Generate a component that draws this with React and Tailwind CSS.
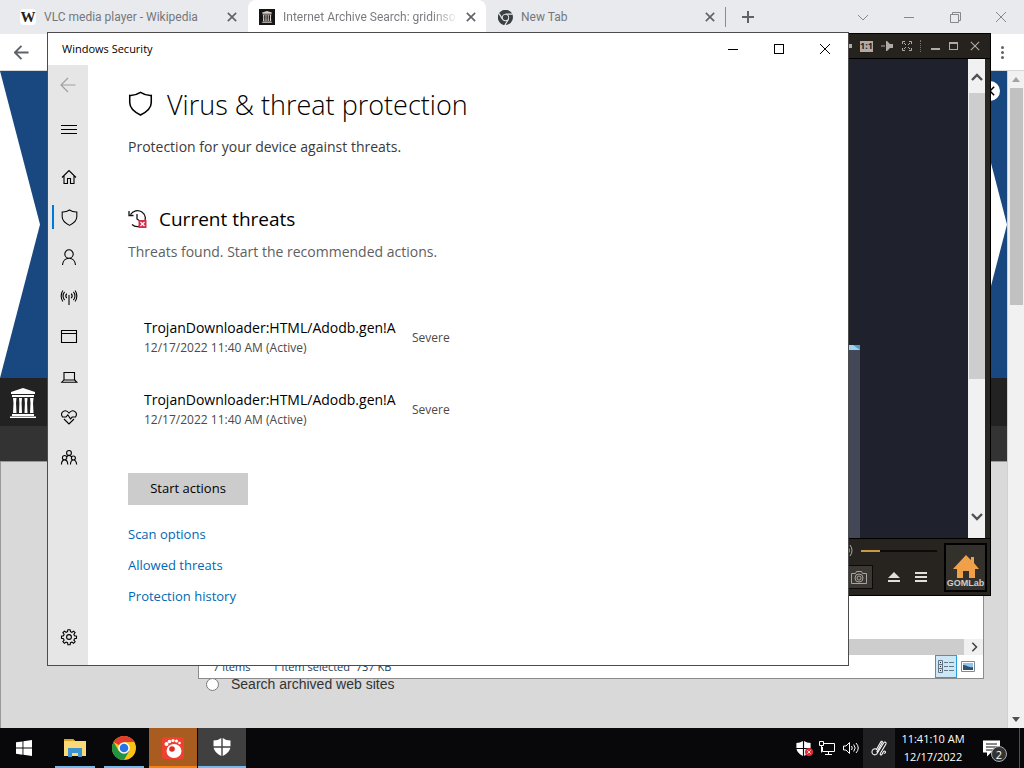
import React from "react";

const stroke = { fill: "none", stroke: "currentColor", strokeWidth: 1.1 };

function Shield({ className, width = 1.6 }) {
  return (
    <svg viewBox="0 0 26 26" className={className} fill="none" stroke="currentColor" strokeWidth={width} aria-hidden="true">
      <path d="M13 1.500C9.600 3.800 6 4.800 1.800 4.600V12c0 5.800 4.200 9.600 11.200 13 7-3.400 11.200-7.200 11.200-13V4.600C20 4.800 16.400 3.800 13 1.500Z" />
    </svg>
  );
}

function Temple({ className, fill = "#fff" }) {
  return (
    <svg viewBox="0 0 26 30" className={className} fill={fill} aria-hidden="true">
      <path d="M13 0 25 4v2H1V4ZM2 7h22v2H2ZM2 26h22v2H2ZM0 28.500h26V30H0Z" />
      <path d="M3 10h3.500l-.5 5 .5 10H3l.5-10ZM9 10h3l-.4 5 .4 10H9l.4-10ZM14.500 10h3l-.4 5 .4 10h-3l.4-10ZM20 10h3.500l-.5 5 .5 10H20l.5-10Z" />
    </svg>
  );
}

function Cross({ className, width = 1.2 }) {
  return (
    <svg viewBox="0 0 12 12" className={className} fill="none" stroke="currentColor" strokeWidth={width} aria-hidden="true">
      <path d="M1 1l10 10M11 1L1 11" />
    </svg>
  );
}

function ArrowLeft({ className, width = 1.2 }) {
  return (
    <svg viewBox="0 0 16 16" className={className} fill="none" stroke="currentColor" strokeWidth={width} aria-hidden="true">
      <path d="M15.500 8H1.500M8 1 1 8l7 7" />
    </svg>
  );
}

function Chevron({ className, d = "M1 8l5-5 5 5", width = 2.4 }) {
  return (
    <svg viewBox="0 0 12 12" className={className} fill="none" stroke="currentColor" strokeWidth={width} aria-hidden="true">
      <path d={d} />
    </svg>
  );
}

const navIcons = {
  menu: <path d="M0 4.500h16M0 8.500h16M0 12.500h16" />,
  home: <path d="M1 8.500 8 1.500l7 7M3 7v7.500h3.500V9.500h3v5H13V7" />,
  account: <path d="M8 .8a4.200 4.200 0 1 1 0 8.400A4.200 4.200 0 0 1 8 .8ZM1.500 16c.3-4 3-6.800 6.500-6.800s6.200 2.800 6.500 6.800" />,
  network: <path d="M8 6v10M5.800 9.200c-1.200-1.300-1.200-3.200 0-4.600M10.200 9.200c1.200-1.300 1.200-3.200 0-4.600M3.600 11C1.500 8.800 1.500 5 3.600 2.800M12.400 11c2.100-2.200 2.100-6 0-8.200M1.900 12.500C-.4 9.500-.4 4.500 1.900 1.500M14.100 12.500c2.300-3 2.300-8 0-11" />,
  app: <path d="M.5 1.500h15v12H.5ZM.5 4.500h15" />,
  device: <path d="M3 3.500h10.500v7.500H3ZM2.800 11 .8 13.200h15L13.700 11" />,
  health: <path d="M1.500 8C.2 6 .4 3.800 2 2.600c1.800-1.300 4.300-.8 6 1.400 1.700-2.200 4.200-2.700 6-1.400 1.600 1.200 1.800 3.400.5 5.400M1 8h4l1.800-2.200L9.500 9.800 11.200 8H15M3 10l5 5 5-5" />,
  family: <path d="M8 1.500a2.400 2.400 0 1 1 0 4.800 2.400 2.400 0 0 1 0-4.800ZM3.600 6.500a2.200 2.200 0 1 1 0 4.400 2.200 2.200 0 0 1 0-4.400ZM12.400 7a2 2 0 1 1 0 4 2 2 0 0 1 0-4ZM.4 15.500c.2-2.800 1.400-4.600 3.200-4.600s3 1.800 3.200 4.600M9.400 15.500c.2-2.800 1.200-4.500 3-4.500s3 1.700 3.200 4.500M5.400 7.800 8 6.300l2.800 1.500" />,
  settings: (
    <>
      <circle cx="8" cy="8" r="2.400" />
      <path d="M6.900.7h2.200l.4 2 1.400.6 1.700-1.200 1.500 1.500-1.200 1.700.6 1.400 2 .4v2.200l-2 .4-.6 1.400 1.200 1.700-1.500 1.500-1.700-1.200-1.400.6-.4 2H6.900l-.4-2-1.400-.6-1.700 1.200-1.500-1.500 1.200-1.700-.6-1.400-2-.4V7.100l2-.4.6-1.400-1.200-1.700 1.500-1.500 1.700 1.200 1.400-.6Z" />
    </>
  ),
};

function NavItem({ name, label, active }) {
  return (
    <button type="button" aria-label={label} className="relative flex h-10 w-full shrink-0 items-center justify-center pl-0.5">
      {active && <span className="absolute left-1 h-6 w-0.5 bg-[#0078d7]" />}
      {name === "shield" ? (
        <Shield className="size-[17px]" />
      ) : (
        <svg viewBox="0 0 16 16" className="size-4 overflow-visible" {...stroke} aria-hidden="true">
          {navIcons[name]}
        </svg>
      )}
    </button>
  );
}

function BrowserTab({ icon, title, active, className }) {
  return (
    <div className={`flex h-full shrink-0 items-center font-['Roboto','Open_Sans',sans-serif] ${active ? "rounded-t-lg bg-white" : ""} ${className}`}>
      {icon}
      <span className={`ml-2 flex-1 whitespace-nowrap text-xs ${active ? "bg-linear-to-r from-[#75777b] from-85% to-white bg-clip-text text-transparent" : "text-[#75777b]"}`}>{title}</span>
      <button type="button" aria-label={"Close " + title} className="ml-2 text-[#5f6368]">
        <Cross className="size-2.5" width={1.9} />
      </button>
    </div>
  );
}

function ChromeMark({ className, mono }) {
  return (
    <svg viewBox="0 0 24 24" className={className} aria-hidden="true">
      <circle cx="12" cy="12" r="12" fill={mono ? "#3c4043" : "#fbc116"} />
      <path d="M12 12 1.600 6A12 12 0 0 1 22.400 6H12Z" fill={mono ? "#3c4043" : "#e33b2e"} />
      <path d="M1.600 6A12 12 0 0 0 12 24l5.200-9L12 12 6.800 15Z" fill={mono ? "#3c4043" : "#229342"} />
      {mono && <path d="M12 6.500h11M7.200 14.800 1.800 5.800M16.800 14.800 11 24" stroke="#e8eaed" strokeWidth="2" />}
      <circle cx="12" cy="12" r="5.800" fill={mono ? "#e8eaed" : "#fff"} />
      <circle cx="12" cy="12" r="4.300" fill={mono ? "#3c4043" : "#2674e8"} />
    </svg>
  );
}

function Browser() {
  return (
    <div className="flex min-h-0 flex-1 flex-col">
      <header className="flex h-[34px] shrink-0 items-center bg-[#e8eaed]">
        <BrowserTab
          className="w-[248px] pl-5 pr-[11px]"
          title="VLC media player - Wikipedia"
          icon={<span className="flex size-4 items-center justify-center rounded-sm bg-white font-['Liberation_Serif',serif] text-[15px] font-bold leading-4 text-[#222]">W</span>}
        />
        <BrowserTab
          active
          className="w-[238px] pl-[11px] pr-2.5"
          title="Internet Archive Search: gridinso"
          icon={<span className="flex size-4 items-center justify-center bg-[#151515]"><Temple className="h-3 w-3" fill="#d9cfc9" /></span>}
        />
        <BrowserTab className="w-[239px] pl-3 pr-2.5" title="New Tab" icon={<ChromeMark mono className="size-[15px]" />} />
        <span className="h-5 w-px bg-[#8a8c90]" />
        <button type="button" aria-label="New tab" className="ml-4 text-[#5f6368]">
          <svg viewBox="0 0 12 12" className="size-3" stroke="currentColor" strokeWidth="2"><path d="M6 0v12M0 6h12" /></svg>
        </button>
        <div className="ml-auto flex h-7 items-center text-[#85878b]">
          <button type="button" aria-label="Search tabs" className="flex w-[46px] justify-center"><Chevron className="size-3" d="M1 4l5 5 5-5" width={1} /></button>
          <button type="button" aria-label="Minimize browser" className="flex w-[46px] justify-center"><span className="h-px w-2.5 bg-[#85878b]" /></button>
          <button type="button" aria-label="Restore browser" className="flex w-[46px] justify-center">
            <svg viewBox="0 0 11 11" className="size-[11px]" fill="none" stroke="currentColor"><path d="M.5 2.500h8v8h-8ZM2.500 2.500v-2h8v8h-2" /></svg>
          </button>
          <button type="button" aria-label="Close browser" className="flex w-[46px] justify-center"><Cross className="size-3" width={1} /></button>
        </div>
      </header>
      <div className="flex h-[37px] shrink-0 items-center justify-between border-b border-[#d5d7da] bg-white pl-3.5 pr-5 text-[#5f6368]">
        <button type="button" aria-label="Back"><ArrowLeft className="size-[15px]" width={2} /></button>
        <button type="button" aria-label="Browser menu" className="flex flex-col gap-0.5">
          <span className="size-[3px] rounded-full bg-current" />
          <span className="size-[3px] rounded-full bg-current" />
          <span className="size-[3px] rounded-full bg-current" />
        </button>
      </div>
      <div className="flex min-h-0 flex-1">
        <main className="flex min-w-0 flex-1 flex-col bg-[#d9d9d9]">
          <div className="relative flex h-[307px] shrink-0 justify-between overflow-hidden bg-[#194880]">
            <svg viewBox="0 0 40 307" className="h-full w-10" fill="#fff" aria-hidden="true"><path d="M0 0 40 153.500 0 307Z" /></svg>
            <svg viewBox="0 0 40 307" className="h-full w-10" fill="#fff" aria-hidden="true"><path d="M0 0 40 153.500 0 307Z" /></svg>
            <button type="button" aria-label="Dismiss banner" className="absolute right-[7px] top-2.5 flex size-5 items-center justify-center rounded-full bg-white text-black">
              <Cross className="size-2.5" width={1.8} />
            </button>
          </div>
          <div className="flex h-12 shrink-0 items-center bg-[#222] pl-2.5 pt-0.5"><Temple className="h-[30px] w-[26px]" /></div>
          <div className="h-[35px] shrink-0 bg-[#333]" />
          <div className="flex flex-1 flex-col border-l border-t border-[#999] pl-[205px] pt-[212px]">
            <label className="flex items-center gap-3 font-['Liberation_Sans',sans-serif] text-sm leading-5 text-[#333]">
              <input type="radio" name="scope" className="size-[13px]" />
              Search archived web sites
            </label>
          </div>
        </main>
        <div className="flex w-[17px] flex-col items-center border-l border-[#d0d0d0] bg-[#f1f1f1] py-1.5">
          <svg viewBox="0 0 8 5" className="mb-1.5 h-[5px] w-2 shrink-0" fill="#a3a3a3"><path d="M4 0 8 5H0Z" /></svg>
          <span className="h-[217px] w-[13px] shrink-0 bg-[#c1c1c1]" />
          <svg viewBox="0 0 8 5" className="mt-auto h-[5px] w-2 shrink-0" fill="#505050"><path d="M0 0h8L4 5Z" /></svg>
        </div>
      </div>
    </div>
  );
}

function Explorer() {
  return (
    <section aria-label="File Explorer" className="absolute left-[198px] top-[500px] flex h-[179px] w-[786px] flex-col justify-end border border-[#8c8c8c] bg-white">
      <div className="flex h-4 shrink-0 bg-[#f0f0f0]">
        <span className="flex-1 bg-[#cdcdcd]" />
        <span className="flex w-[19px] items-center justify-center text-[#404040]"><Chevron className="size-2.5" d="M4 1l5 5-5 5" width={1.8} /></span>
      </div>
      <div className="flex h-[23px] shrink-0 items-center pl-3.5 text-[11px] leading-4 text-[#253d57]">
        <span>7 items</span>
        <span className="ml-[22px]">1 item selected&nbsp; 737 KB</span>
        <button type="button" aria-label="Details view" className="ml-auto flex h-[23px] w-[22px] items-center justify-center border border-[#26a0da] bg-[#cce8f6]">
          <svg viewBox="0 0 16 13" className="h-[13px] w-4" fill="none" stroke="#637788"><path d="M.5.5h4v12h-4ZM.5 4.500h4M.5 8.500h4M6 2.500h4M11 2.500h5M6 6.500h4M11 6.500h5M6 10.500h4M11 10.500h5" /><path d="M2 2.500h1M2 6.500h1M2 10.500h1" stroke="#222" /></svg>
        </button>
        <button type="button" aria-label="Thumbnail view" className="ml-1 mr-2">
          <svg viewBox="0 0 14 11" className="h-[11px] w-3.5"><path d="M.5.5h13v10H.5Z" fill="#fff" stroke="#7d8b98" /><path d="M2 2h10v7H2Z" fill="#91c5e9" /><path d="M2 4c4 0 5 3 10 2v3H2Z" fill="#31516b" /></svg>
        </button>
      </div>
    </section>
  );
}

function MediaPlayer() {
  return (
    <section aria-label="GOM Player" className="absolute left-[600px] top-[33px] flex h-[563px] w-[391px] flex-col border border-black bg-[#26231f] text-[#b0aca5]">
      <div className="flex h-6 shrink-0 items-center justify-end gap-2 pr-2.5">
        <span className="h-1 w-3 bg-current" />
        <span className="flex h-[11px] w-[13px] items-center justify-center bg-[#b0aca5] text-[9px] font-bold leading-3 text-[#26231f]">1:1</span>
        <svg viewBox="0 0 13 12" className="h-3 w-[13px]" fill="currentColor"><path d="M0 5.500h4v1H0ZM5 1h1l3 3h3v4H9l-3 3H5Z" /></svg>
        <svg viewBox="0 0 10 10" className="size-2.5" fill="none" stroke="currentColor"><path d="M.5 3V.5H3M7 .5h2.500V3M9.500 7v2.500H7M3 9.500H.5V7M2 2l2 2M8 2 6 4M8 8 6 6M2 8l2-2" /></svg>
        <span className="h-3 border-l border-dotted border-[#77736c]" />
        <button type="button" aria-label="Minimize player" className="flex h-2 w-3 items-end justify-center"><span className="h-0.5 w-[9px] bg-current" /></button>
        <button type="button" aria-label="Maximize player" className="h-2 w-[9px] border border-t-2 border-[#b0aca5]" />
        <button type="button" aria-label="Close player" className="ml-1"><Cross className="size-2.5" width={1.3} /></button>
      </div>
      <div className="flex min-h-0 flex-1 border-y border-black bg-[#1f212d] pr-[5px]">
        <div className="flex min-w-0 flex-1 items-end">
          <svg viewBox="0 0 259 193" className="h-[193px] w-[259px]" aria-hidden="true">
            <path d="M0 0h259v193H0Z" fill="#444757" />
            <path d="M0 0h259v5H0Z" fill="#9bd4f0" />
            <path d="M252 0h7v5Z" fill="#4f9cc6" />
          </svg>
        </div>
        <div className="flex w-[17px] flex-col items-center bg-[#f1f1f1] text-[#505050]">
          <Chevron className="my-[11px] size-3 shrink-0" d="M1 10l5-5 5 5" />
          <span className="h-[286px] w-4 shrink-0 bg-[#cdcdcd]" />
          <Chevron className="mb-4 mt-auto size-3 shrink-0" d="M1 4l5 5 5-5" />
        </div>
        <span className="-mr-[5px] w-[5px] bg-[#292622]" />
      </div>
      <div className="flex h-[56px] shrink-0 items-center justify-end gap-[7px] bg-[#272420] pr-[3px]">
        <div className="flex h-full w-[92px] flex-col justify-between pb-1.5 pt-1.5">
          <div className="flex items-center gap-2">
            <svg viewBox="0 0 8 11" className="h-[11px] w-2" fill="none" stroke="currentColor"><path d="M1 3q2 2.500 0 5M3 1.500q3 4 0 8M5 0q4 5.500 0 11" /></svg>
            <span className="flex h-0.5 flex-1 bg-[#0c0b0a]"><span className="w-1/4 bg-[#c79b45]" /></span>
          </div>
          <div className="flex items-center gap-[15px] text-[#e1dfda]">
            <button type="button" aria-label="Screenshot" className="flex h-6 w-7 items-center justify-center border border-[#0b0a09] bg-[#3b3733] text-[#a9a59d]">
              <svg viewBox="0 0 16 14" className="h-3.5 w-4" fill="none" stroke="currentColor"><path d="M.5 3.500h4l1-2h5l1 2h4v10H.5Z" /><circle cx="8" cy="8" r="4" /><circle cx="8" cy="8" r="2" /></svg>
            </button>
            <button type="button" aria-label="Open file"><svg viewBox="0 0 12 11" className="h-[11px] w-3" fill="currentColor"><path d="M6 0 12 6H0ZM0 8h12v2H0Z" /></svg></button>
            <button type="button" aria-label="Playlist"><svg viewBox="0 0 12 11" className="h-[11px] w-3" fill="currentColor"><path d="M0 0h12v2H0ZM0 4h12v2H0ZM0 8h12v2H0Z" /></svg></button>
          </div>
        </div>
        <a href="#gomlab" className="flex h-[49px] w-[43px] flex-col items-center justify-end border-2 border-black bg-[#34312d] pb-0.5">
          <svg viewBox="0 0 26 23" className="h-[23px] w-[26px]" fill="#f0a048"><path d="M13 0 18 5V2h3v6l5 6h-4v9h-6v-7h-6v7H4v-9H0Z" /></svg>
          <span className="whitespace-nowrap font-['Liberation_Sans',sans-serif] text-[9px] font-bold leading-[10px] text-[#d0ccc5]">GOMLab</span>
        </a>
      </div>
    </section>
  );
}

const threats = [
  { id: 1, name: "TrojanDownloader:HTML/Adodb.gen!A", detail: "12/17/2022 11:40 AM (Active)", level: "Severe" },
  { id: 2, name: "TrojanDownloader:HTML/Adodb.gen!A", detail: "12/17/2022 11:40 AM (Active)", level: "Severe" },
];

function Security() {
  return (
    <section aria-label="Windows Security" className="absolute left-[47px] top-8 flex h-[634px] w-[802px] flex-col border border-[#4c4c4c] bg-white text-black">
      <header className="flex h-8 shrink-0 items-center justify-between pl-3.5">
        <span className="text-[11px]">Windows Security</span>
        <div className="flex h-full">
          <button type="button" aria-label="Minimize" className="flex w-[46px] items-center justify-center"><span className="h-px w-2.5 bg-black" /></button>
          <button type="button" aria-label="Maximize" className="flex w-[46px] items-center justify-center"><span className="size-2.5 border border-black" /></button>
          <button type="button" aria-label="Close" className="flex w-[46px] items-center justify-center"><Cross className="size-3" width={1} /></button>
        </div>
      </header>
      <div className="flex min-h-0 flex-1">
        <nav aria-label="Sections" className="flex w-10 flex-col bg-[#e6e6e6] pb-2">
          <button type="button" aria-label="Go back" className="flex h-10 items-center justify-center text-[#a0a0a0]"><ArrowLeft className="size-4" /></button>
          <div className="mb-2 mt-1"><NavItem name="menu" label="Menu" /></div>
          <NavItem name="home" label="Home" />
          <NavItem name="shield" label="Virus & threat protection" active />
          <NavItem name="account" label="Account protection" />
          <NavItem name="network" label="Firewall & network protection" />
          <NavItem name="app" label="App & browser control" />
          <NavItem name="device" label="Device security" />
          <NavItem name="health" label="Device performance & health" />
          <NavItem name="family" label="Family options" />
          <div className="mt-auto"><NavItem name="settings" label="Settings" /></div>
        </nav>
        <main className="min-w-0 flex-1 px-10 pt-[22px]">
          <h1 className="flex items-center gap-3.5 text-[27px] font-light leading-9">
            <Shield className="-mt-1 size-[25px]" />
            Virus &amp; threat protection
          </h1>
          <p className="mt-3.5 text-sm leading-5 text-[#3a3a3a]">Protection for your device against threats.</p>
          <h2 className="mt-12 flex items-center gap-3 text-[19px] leading-7">
            <svg viewBox="0 0 19 19" className="-mt-0.5 size-[19px]" fill="none" stroke="#111" strokeWidth="1.300" aria-hidden="true">
              <path d="M2.500 5.500A8 8 0 1 1 4 15.500M1 2v4.500h4.500M9 5v5l3.500 2.500" />
              <path d="M10.500 11h8v8h-8Z" fill="#d52b4a" stroke="none" />
              <path d="M12.500 13l4 4M16.500 13l-4 4" stroke="#fff" />
            </svg>
            Current threats
          </h2>
          <p className="mt-[9px] text-sm leading-5 text-[#606060]">Threats found. Start the recommended actions.</p>
          <ul className="mt-14 flex flex-col gap-8 pl-4">
            {threats.map((t) => (
              <li key={t.id} className="flex items-center gap-3">
                <div className="w-64">
                  <div className="text-sm leading-5">{t.name}</div>
                  <div className="text-xs leading-5 text-[#4a4a4a]">{t.detail}</div>
                </div>
                <span className="text-xs leading-5 text-[#4a4a4a]">{t.level}</span>
              </li>
            ))}
          </ul>
          <button type="button" className="mt-[43px] h-8 w-[120px] bg-[#ccc] text-[13px]">Start actions</button>
          <div className="mt-3.5 flex flex-col items-start text-[13px] leading-[31px] text-[#0068b4]">
            <a href="#scan">Scan options</a>
            <a href="#allowed">Allowed threats</a>
            <a href="#history">Protection history</a>
          </div>
        </main>
      </div>
    </section>
  );
}

function DefenderIcon({ className }) {
  return (
    <svg viewBox="0 0 18 18" className={className} fill="#fff" aria-hidden="true">
      <path d="M8.300 0v8.300H.5V2.500Q5 2.500 8.300 0ZM9.700 0Q13 2.500 17.500 2.500v5.800H9.700ZM.6 9.700h7.700V18Q1.500 14.500.6 9.700ZM9.700 9.700h7.700Q16.500 14.500 9.700 18Z" />
    </svg>
  );
}

function TaskButton({ label, className, children }) {
  return (
    <button type="button" aria-label={label} className={`relative flex h-10 w-12 items-center justify-center ${className ?? ""}`}>
      {children}
    </button>
  );
}

function Taskbar() {
  return (
    <footer className="relative flex h-10 shrink-0 items-stretch bg-[#08080a] text-white">
      <div className="flex gap-px">
        <TaskButton label="Start" className="mr-0.5">
          <svg viewBox="0 0 16 16" className="size-4" fill="#fff"><path d="M0 2.300 6.500 1.400v6.200H0ZM7.400 1.200 16 0v7.600H7.400ZM0 8.500h6.500v6.200L0 13.800ZM7.400 8.500H16V16l-8.600-1.200Z" /></svg>
        </TaskButton>
        <TaskButton label="File Explorer">
          <svg viewBox="0 0 22 18" className="h-[18px] w-[22px]"><path d="M0 0h9l2 2h11v15H0Z" fill="#f9d978" /><path d="M0 0h9l2 2H0Z" fill="#d9a21f" /><path d="M4 9h14v9h-4v-4H8v4H4Z" fill="#3c93cf" /></svg>
          <span className="absolute bottom-0 h-0.5 w-10 bg-[#76b9ed]" />
        </TaskButton>
        <TaskButton label="Chrome">
          <ChromeMark className="size-6" />
          <span className="absolute bottom-0 h-0.5 w-10 bg-[#76b9ed]" />
        </TaskButton>
        <TaskButton label="GOM Player" className="border-b-2 border-[#f7820e] bg-[#a85c20]">
          <svg viewBox="0 0 22 22" className="mt-0.5 size-[22px]" fill="#fff"><rect width="22" height="22" rx="3" fill="#f04030" /><ellipse cx="12" cy="14" rx="7.500" ry="7" /><circle cx="4.500" cy="7" r="2" /><circle cx="7.500" cy="4.500" r="1.800" /><circle cx="11" cy="3.500" r="1.600" /><circle cx="14.500" cy="4" r="1.500" /><circle cx="17.500" cy="6" r="1.300" /><circle cx="10" cy="12" r="2.800" fill="#e02c24" /></svg>
        </TaskButton>
        <TaskButton label="Windows Security" className="border-b-2 border-[#76b9ed] bg-[#404040]"><DefenderIcon className="size-[18px]" /></TaskButton>
      </div>
      <div className="ml-auto flex items-center">
        <div className="flex items-center gap-2 pr-1">
          <button type="button" aria-label="Security status" className="relative">
            <DefenderIcon className="size-[15px]" />
            <span className="absolute -right-0.5 bottom-0 flex size-2 items-center justify-center rounded-full bg-[#e02c36]"><Cross className="size-1" width={2.4} /></span>
          </button>
          <button type="button" aria-label="Network"><svg viewBox="0 0 16 14" className="h-3.5 w-4" fill="none" stroke="#fff"><path d="M5 2.500h10.500v8H3.500V6M.5.500h4v4h-4ZM2.500 4.500v7M6 13.500h7M9.500 10.500v3" /></svg></button>
          <button type="button" aria-label="Volume"><svg viewBox="0 0 16 14" className="h-3.5 w-4" fill="none" stroke="#fff"><path d="M.5 5h2.500l3.500-3.500v11L3 9H.5ZM8.500 5q1.500 2 0 4M10.700 3.500q3 3.500 0 7M13 2q4.500 5 0 10" /></svg></button>
        </div>
        <button type="button" aria-label="Pen workspace" className="flex h-10 w-8 items-center justify-center bg-[#202022]">
          <svg viewBox="0 0 18 18" className="size-[17px]" fill="none" stroke="#fff" strokeWidth="1.100"><path d="M5.500 9.500C3 8.500.8 10.500 1 13s3 3.500 5 2L13.500 3c1-1.600 3.200-.4 2.300 1.300L10 14c-1 2 1 2.500 2 .5 1-2 2-3.500 3-2.500s0 2.500-1.500 2M6 13l6-10.500C12.500 1.500 11 .8 10.300 2L5.500 10.500" /></svg>
        </button>
        <time className="w-[76px] text-center text-[11px] leading-[18px]">
          <span className="block whitespace-nowrap">11:41:10 AM</span>
          <span className="block">12/17/2022</span>
        </time>
        <button type="button" aria-label="2 notifications" className="relative flex h-10 w-12 items-center justify-center pr-2">
          <svg viewBox="0 0 17 16" className="size-[17px]" fill="#fff"><path d="M0 0h17v12H8l-4 4v-4H0Z" /><path d="M3 3.500h11M3 6.500h11M3 9.500h7" stroke="#111" /></svg>
          <span className="absolute bottom-1.5 right-3 flex size-4 items-center justify-center rounded-full border border-[#aaa] bg-[#333] text-[11px] leading-none">2</span>
        </button>
        <span className="mr-1 h-10 w-px bg-[#505050]" />
      </div>
    </footer>
  );
}

export default function App() {
  return (
    <div className="relative flex h-screen flex-col overflow-hidden font-['Open_Sans','Noto_Sans',sans-serif]">
      <Browser />
      <Explorer />
      <MediaPlayer />
      <Security />
      <Taskbar />
    </div>
  );
}
